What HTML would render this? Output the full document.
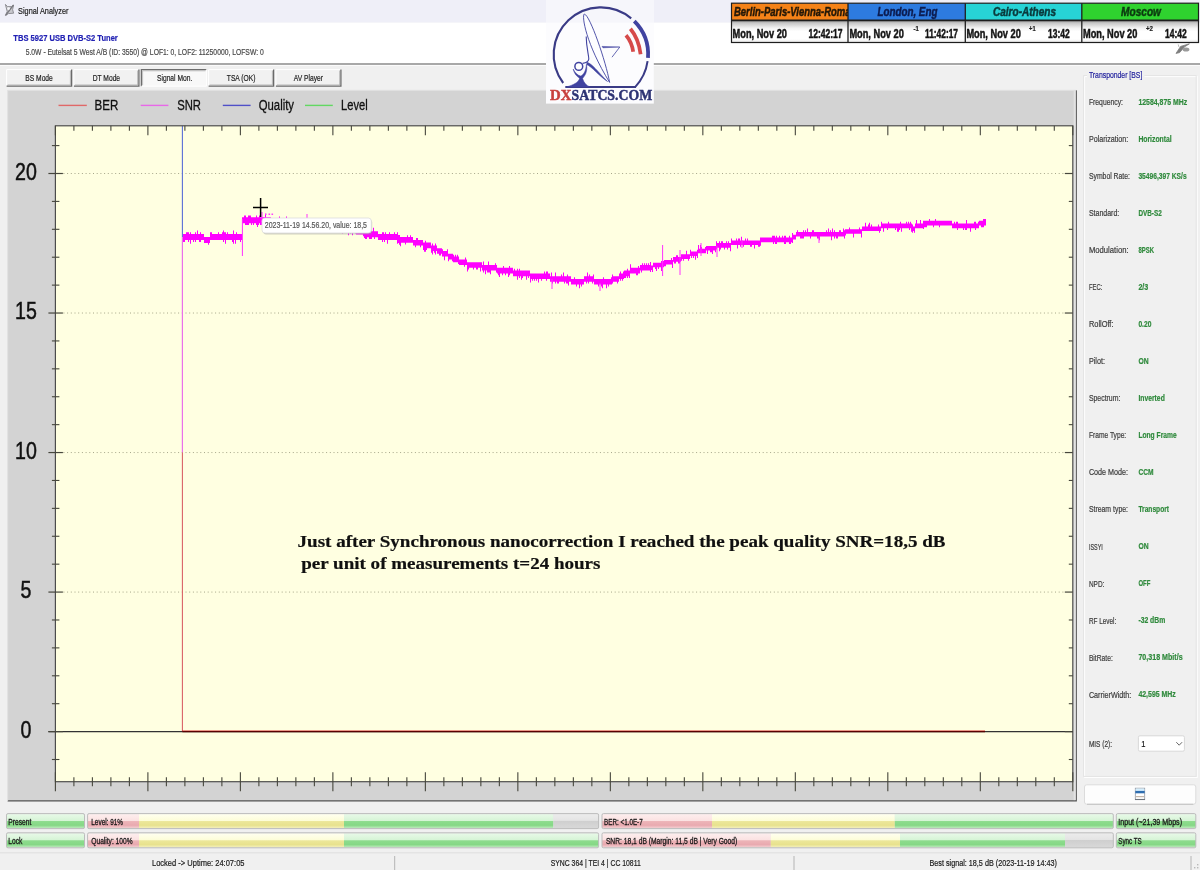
<!DOCTYPE html>
<html lang="en"><head><meta charset="utf-8"><title>Signal Analyzer</title>
<style>html,body{margin:0;padding:0;background:#f0f0f0;overflow:hidden}body{width:1200px;height:870px}svg text{white-space:pre}</style>
</head><body>
<svg width="1200" height="870" viewBox="0 0 1200 870" style="display:block;will-change:transform">
<defs>
<linearGradient id="gG" x1="0" y1="0" x2="0" y2="1"><stop offset="0" stop-color="#e8f9e8"/><stop offset="0.47" stop-color="#d6f4d6"/><stop offset="0.53" stop-color="#8ddc8d"/><stop offset="0.8" stop-color="#86d886"/><stop offset="1" stop-color="#bdeabd"/></linearGradient>
<linearGradient id="gR" x1="0" y1="0" x2="0" y2="1"><stop offset="0" stop-color="#fdeeee"/><stop offset="0.47" stop-color="#fbe2e2"/><stop offset="0.53" stop-color="#edb4b8"/><stop offset="0.8" stop-color="#e9aab0"/><stop offset="1" stop-color="#f3cfd2"/></linearGradient>
<linearGradient id="gY" x1="0" y1="0" x2="0" y2="1"><stop offset="0" stop-color="#fffff0"/><stop offset="0.47" stop-color="#fdfdd8"/><stop offset="0.53" stop-color="#ece79a"/><stop offset="0.8" stop-color="#e8e28e"/><stop offset="1" stop-color="#f3efbc"/></linearGradient>
<linearGradient id="gE" x1="0" y1="0" x2="0" y2="1"><stop offset="0" stop-color="#ececec"/><stop offset="0.45" stop-color="#e4e4e4"/><stop offset="0.5" stop-color="#cfcfcf"/><stop offset="1" stop-color="#d8d8d8"/></linearGradient>
<linearGradient id="gT" x1="0" y1="0" x2="0" y2="1"><stop offset="0" stop-color="#9a9a9a"/><stop offset="0.12" stop-color="#c8c8c8"/><stop offset="0.35" stop-color="#f4f4f4"/><stop offset="0.5" stop-color="#ffffff"/><stop offset="0.85" stop-color="#ffffff"/><stop offset="1" stop-color="#e4e4e4"/></linearGradient>
<clipPath id="cp1"><rect x="732" y="3" width="116" height="18"/></clipPath>
<clipPath id="plot"><rect x="55.5" y="125.5" width="1017.5" height="656"/></clipPath>
</defs>
<rect x="0" y="0" width="1200" height="870" fill="#f0f0f0"/>
<rect x="0" y="0" width="1200" height="22.6" fill="#efeff8"/>
<rect x="0" y="22.6" width="1200" height="40.4" fill="#ffffff"/>
<rect x="0" y="63" width="1200" height="2" fill="#a8a8a8"/>
<line x1="0" y1="65.5" x2="1200" y2="65.5" stroke="#fbfbfb" stroke-width="1"/>
<g><path d="M5.4 4.4 L7.6 6.6 L11.6 6.6 L13.6 5 L12.6 9.6 L13.6 13.2 L8.4 13.6 L5.4 15.6 L7.2 11.4 Z" fill="#c9c9ce" stroke="#86868c" stroke-width="0.9" stroke-linejoin="round"/><path d="M13.4 5.2 L5.8 15.2" stroke="#77777c" stroke-width="1.3" fill="none"/><circle cx="8.6" cy="8.6" r="1.3" fill="#f4f4f8"/></g>
<text x="18.1" y="13.6" font-family="'Liberation Sans', sans-serif" font-size="9.4" stroke="#1c1c1c" stroke-width="0.2" fill="#1c1c1c" textLength="50.3" lengthAdjust="spacingAndGlyphs">Signal Analyzer</text>
<text x="13.3" y="41.4" font-family="'Liberation Sans', sans-serif" font-size="9.7" font-weight="bold" stroke="#2222b4" stroke-width="0.2" fill="#2222b4" textLength="104.5" lengthAdjust="spacingAndGlyphs">TBS 5927 USB DVB-S2 Tuner</text>
<text x="25.7" y="55.4" font-family="'Liberation Sans', sans-serif" font-size="8.6" stroke="#4a4a4a" stroke-width="0.2" fill="#4a4a4a" textLength="238.0" lengthAdjust="spacingAndGlyphs">5.0W - Eutelsat 5 West A/B (ID: 3550) @ LOF1: 0, LOF2: 11250000, LOFSW: 0</text>
<rect x="731.5" y="3.2" width="467" height="39.3" fill="#ffffff"/>
<rect x="731.5" y="3.2" width="116.5" height="17.3" fill="#f58218"/>
<rect x="731.5" y="20.5" width="116.5" height="22" fill="url(#gT)"/>
<rect x="848" y="3.2" width="117.29999999999995" height="17.3" fill="#2d7be0"/>
<rect x="848" y="20.5" width="117.29999999999995" height="22" fill="url(#gT)"/>
<rect x="965.3" y="3.2" width="116.5" height="17.3" fill="#27d3d6"/>
<rect x="965.3" y="20.5" width="116.5" height="22" fill="url(#gT)"/>
<rect x="1081.8" y="3.2" width="116.70000000000005" height="17.3" fill="#2fd22f"/>
<rect x="1081.8" y="20.5" width="116.70000000000005" height="22" fill="url(#gT)"/>
<text x="734.0" y="15.8" font-family="'Liberation Sans', sans-serif" font-size="12.6" font-weight="bold" font-style="italic" fill="#241808" textLength="116.5" lengthAdjust="spacingAndGlyphs" clip-path="url(#cp1)" stroke="#241808" stroke-width="0.5">Berlin-Paris-Vienna-Roma</text>
<text x="877.4" y="15.8" font-family="'Liberation Sans', sans-serif" font-size="12.6" font-weight="bold" font-style="italic" fill="#0c1c50" textLength="60.0" lengthAdjust="spacingAndGlyphs" stroke="#0c1c50" stroke-width="0.5">London, Eng</text>
<text x="993.0" y="15.8" font-family="'Liberation Sans', sans-serif" font-size="12.6" font-weight="bold" font-style="italic" fill="#0a3a3c" textLength="63.0" lengthAdjust="spacingAndGlyphs" stroke="#0a3a3c" stroke-width="0.5">Cairo-Athens</text>
<text x="1121.0" y="15.8" font-family="'Liberation Sans', sans-serif" font-size="12.6" font-weight="bold" font-style="italic" fill="#0c3a10" textLength="40.0" lengthAdjust="spacingAndGlyphs" stroke="#0c3a10" stroke-width="0.5">Moscow</text>
<text x="732.6" y="38.0" font-family="'Liberation Sans', sans-serif" font-size="12.4" font-weight="bold" fill="#141414" textLength="54.4" lengthAdjust="spacingAndGlyphs" stroke="#141414" stroke-width="0.5">Mon, Nov 20</text>
<text x="849.4" y="38.0" font-family="'Liberation Sans', sans-serif" font-size="12.4" font-weight="bold" fill="#141414" textLength="54.4" lengthAdjust="spacingAndGlyphs" stroke="#141414" stroke-width="0.5">Mon, Nov 20</text>
<text x="966.4" y="38.0" font-family="'Liberation Sans', sans-serif" font-size="12.4" font-weight="bold" fill="#141414" textLength="54.4" lengthAdjust="spacingAndGlyphs" stroke="#141414" stroke-width="0.5">Mon, Nov 20</text>
<text x="1083.0" y="38.0" font-family="'Liberation Sans', sans-serif" font-size="12.4" font-weight="bold" fill="#141414" textLength="54.4" lengthAdjust="spacingAndGlyphs" stroke="#141414" stroke-width="0.5">Mon, Nov 20</text>
<text x="808.5" y="38.0" font-family="'Liberation Sans', sans-serif" font-size="12.4" font-weight="bold" fill="#141414" textLength="34.1" lengthAdjust="spacingAndGlyphs" stroke="#141414" stroke-width="0.5">12:42:17</text>
<text x="925.0" y="38.0" font-family="'Liberation Sans', sans-serif" font-size="12.4" font-weight="bold" fill="#141414" textLength="33.0" lengthAdjust="spacingAndGlyphs" stroke="#141414" stroke-width="0.5">11:42:17</text>
<text x="1048.0" y="38.0" font-family="'Liberation Sans', sans-serif" font-size="12.4" font-weight="bold" fill="#141414" textLength="21.6" lengthAdjust="spacingAndGlyphs" stroke="#141414" stroke-width="0.5">13:42</text>
<text x="1165.0" y="38.0" font-family="'Liberation Sans', sans-serif" font-size="12.4" font-weight="bold" fill="#141414" textLength="21.6" lengthAdjust="spacingAndGlyphs" stroke="#141414" stroke-width="0.5">14:42</text>
<text x="913.4" y="31.0" font-family="'Liberation Sans', sans-serif" font-size="6.5" font-weight="bold" stroke="#222" stroke-width="0.2" fill="#222" textLength="5.4" lengthAdjust="spacingAndGlyphs">-1</text>
<text x="1029.0" y="31.0" font-family="'Liberation Sans', sans-serif" font-size="6.5" font-weight="bold" stroke="#222" stroke-width="0.2" fill="#222" textLength="6.6" lengthAdjust="spacingAndGlyphs">+1</text>
<text x="1146.0" y="31.0" font-family="'Liberation Sans', sans-serif" font-size="6.5" font-weight="bold" stroke="#222" stroke-width="0.2" fill="#222" textLength="7.0" lengthAdjust="spacingAndGlyphs">+2</text>
<rect x="731.5" y="3.2" width="467" height="39.3" fill="none" stroke="#1e1e1e" stroke-width="1.2"/>
<line x1="731.5" y1="20.4" x2="1198.5" y2="20.4" stroke="#1e1e1e" stroke-width="1.8"/>
<line x1="848" y1="3.2" x2="848" y2="42.5" stroke="#1e1e1e" stroke-width="1.3"/>
<line x1="965.3" y1="3.2" x2="965.3" y2="42.5" stroke="#1e1e1e" stroke-width="1.3"/>
<line x1="1081.8" y1="3.2" x2="1081.8" y2="42.5" stroke="#1e1e1e" stroke-width="1.3"/>
<g><path d="M1176 53.4 L1180.6 46.4 L1189.4 43.8 L1184.6 46.8 L1179.6 52.6 Z" fill="#7c7c7c" stroke="#7c7c7c" stroke-width="0.8" stroke-linejoin="round"/><ellipse cx="1186" cy="49.6" rx="3.4" ry="2" fill="#9a9a9a"/><path d="M1178.2 44.4 L1179 47" stroke="#b0b0b0" stroke-width="0.9"/></g>
<rect x="6.6" y="69.6" width="65" height="16.6" fill="#f1f1f1"/>
<path d="M6.6 86.19999999999999 V69.6 H71.6" fill="none" stroke="#ffffff" stroke-width="1"/>
<path d="M71.6 69.6 V86.19999999999999 H6.6" fill="none" stroke="#6a6a6a" stroke-width="1.3"/>
<path d="M70.39999999999999 70.6 V84.99999999999999 H7.6" fill="none" stroke="#a8a8a8" stroke-width="0.8"/>
<text x="25.3" y="80.7" font-family="'Liberation Sans', sans-serif" font-size="8.8" stroke="#1e1e1e" stroke-width="0.2" fill="#1e1e1e" textLength="27.5" lengthAdjust="spacingAndGlyphs">BS Mode</text>
<rect x="73.9" y="69.6" width="65" height="16.6" fill="#f1f1f1"/>
<path d="M73.9 86.19999999999999 V69.6 H138.9" fill="none" stroke="#ffffff" stroke-width="1"/>
<path d="M138.9 69.6 V86.19999999999999 H73.9" fill="none" stroke="#6a6a6a" stroke-width="1.3"/>
<path d="M137.70000000000002 70.6 V84.99999999999999 H74.9" fill="none" stroke="#a8a8a8" stroke-width="0.8"/>
<text x="92.7" y="80.7" font-family="'Liberation Sans', sans-serif" font-size="8.8" stroke="#1e1e1e" stroke-width="0.2" fill="#1e1e1e" textLength="27.4" lengthAdjust="spacingAndGlyphs">DT Mode</text>
<rect x="141.4" y="69.6" width="65" height="16.6" fill="#f8f8f8"/>
<path d="M141.4 86.19999999999999 V69.6 H206.4" fill="none" stroke="#6e6e6e" stroke-width="1.3"/>
<path d="M206.4 69.6 V86.19999999999999 H141.4" fill="none" stroke="#ffffff" stroke-width="1"/>
<path d="M142.6 85.19999999999999 V70.8 H205.4" fill="none" stroke="#b4b4b4" stroke-width="0.8"/>
<text x="157.0" y="81.3" font-family="'Liberation Sans', sans-serif" font-size="8.8" stroke="#1e1e1e" stroke-width="0.2" fill="#1e1e1e" textLength="35.3" lengthAdjust="spacingAndGlyphs">Signal Mon.</text>
<rect x="208.6" y="69.6" width="65" height="16.6" fill="#f1f1f1"/>
<path d="M208.6 86.19999999999999 V69.6 H273.6" fill="none" stroke="#ffffff" stroke-width="1"/>
<path d="M273.6 69.6 V86.19999999999999 H208.6" fill="none" stroke="#6a6a6a" stroke-width="1.3"/>
<path d="M272.40000000000003 70.6 V84.99999999999999 H209.6" fill="none" stroke="#a8a8a8" stroke-width="0.8"/>
<text x="226.8" y="80.7" font-family="'Liberation Sans', sans-serif" font-size="8.8" stroke="#1e1e1e" stroke-width="0.2" fill="#1e1e1e" textLength="28.6" lengthAdjust="spacingAndGlyphs">TSA (OK)</text>
<rect x="275.9" y="69.6" width="65" height="16.6" fill="#f1f1f1"/>
<path d="M275.9 86.19999999999999 V69.6 H340.9" fill="none" stroke="#ffffff" stroke-width="1"/>
<path d="M340.9 69.6 V86.19999999999999 H275.9" fill="none" stroke="#6a6a6a" stroke-width="1.3"/>
<path d="M339.7 70.6 V84.99999999999999 H276.9" fill="none" stroke="#a8a8a8" stroke-width="0.8"/>
<text x="293.8" y="80.7" font-family="'Liberation Sans', sans-serif" font-size="8.8" stroke="#1e1e1e" stroke-width="0.2" fill="#1e1e1e" textLength="29.2" lengthAdjust="spacingAndGlyphs">AV Player</text>
<rect x="7.6" y="90.3" width="1068.6000000000001" height="710.5" fill="#d3d3d3"/>
<path d="M7.6 800.8 H1076.2 V90.3" fill="none" stroke="#525252" stroke-width="1.3"/>
<path d="M7.6 800.8 V90.3 H1076.2" fill="none" stroke="#e2e2e2" stroke-width="1"/>
<rect x="1073.6" y="90.8" width="2.2" height="709.3" fill="#e2e2e2"/>
<rect x="55.4" y="125.8" width="1017.4" height="655.9000000000001" fill="#ffffe1"/>
<line x1="63.4" y1="592.075" x2="1064.8" y2="592.075" stroke="#a6a68a" stroke-width="1" stroke-dasharray="1 2.7"/>
<line x1="63.4" y1="452.55" x2="1064.8" y2="452.55" stroke="#a6a68a" stroke-width="1" stroke-dasharray="1 2.7"/>
<line x1="63.4" y1="313.025" x2="1064.8" y2="313.025" stroke="#a6a68a" stroke-width="1" stroke-dasharray="1 2.7"/>
<line x1="63.4" y1="173.5" x2="1064.8" y2="173.5" stroke="#a6a68a" stroke-width="1" stroke-dasharray="1 2.7"/>
<line x1="58.5" y1="105.4" x2="86.8" y2="105.4" stroke="#e06868" stroke-width="1.4"/>
<text x="94.5" y="109.8" font-family="'Liberation Sans', sans-serif" font-size="14" stroke="#111" stroke-width="0.3" fill="#111" textLength="23.8" lengthAdjust="spacingAndGlyphs">BER</text>
<line x1="140.7" y1="105.4" x2="168.4" y2="105.4" stroke="#e868e8" stroke-width="1.4"/>
<text x="177.2" y="109.8" font-family="'Liberation Sans', sans-serif" font-size="14" stroke="#111" stroke-width="0.3" fill="#111" textLength="23.8" lengthAdjust="spacingAndGlyphs">SNR</text>
<line x1="222.8" y1="105.4" x2="250.6" y2="105.4" stroke="#5050c8" stroke-width="1.4"/>
<text x="258.7" y="109.8" font-family="'Liberation Sans', sans-serif" font-size="14" stroke="#111" stroke-width="0.3" fill="#111" textLength="35.3" lengthAdjust="spacingAndGlyphs">Quality</text>
<line x1="305" y1="105.4" x2="332.8" y2="105.4" stroke="#62d862" stroke-width="1.4"/>
<text x="341.0" y="109.8" font-family="'Liberation Sans', sans-serif" font-size="14" stroke="#111" stroke-width="0.3" fill="#111" textLength="26.6" lengthAdjust="spacingAndGlyphs">Level</text>
<text x="20.6" y="737.7" font-family="'Liberation Sans', sans-serif" font-size="24.6" stroke="#111" stroke-width="0.5" fill="#111" textLength="10.9" lengthAdjust="spacingAndGlyphs">0</text>
<text x="20.6" y="598.2" font-family="'Liberation Sans', sans-serif" font-size="24.6" stroke="#111" stroke-width="0.5" fill="#111" textLength="10.9" lengthAdjust="spacingAndGlyphs">5</text>
<text x="15.1" y="458.7" font-family="'Liberation Sans', sans-serif" font-size="24.6" stroke="#111" stroke-width="0.5" fill="#111" textLength="21.8" lengthAdjust="spacingAndGlyphs">10</text>
<text x="15.1" y="319.1" font-family="'Liberation Sans', sans-serif" font-size="24.6" stroke="#111" stroke-width="0.5" fill="#111" textLength="21.8" lengthAdjust="spacingAndGlyphs">15</text>
<text x="15.1" y="179.6" font-family="'Liberation Sans', sans-serif" font-size="24.6" stroke="#111" stroke-width="0.5" fill="#111" textLength="21.8" lengthAdjust="spacingAndGlyphs">20</text>
<g clip-path="url(#plot)">
<line x1="182.4" y1="125.8" x2="182.4" y2="237" stroke="#5a6ed6" stroke-width="1.1"/>
<line x1="182.4" y1="237" x2="182.4" y2="452.55" stroke="#ea70ea" stroke-width="1.2"/>
<line x1="182.4" y1="452.55" x2="182.4" y2="731.6" stroke="#d85c62" stroke-width="1.05"/>
<path d="M183.5 234.1V241.9M184.5 234.1V241.9M185.5 234.1V240.1M186.5 232.3V240.1M187.5 232.3V240.1M188.5 232.3V241.9M189.5 234.1V240.1M190.5 232.3V243.7M191.5 234.1V240.1M192.5 234.1V240.1M193.5 234.1V241.9M194.5 234.1V240.1M195.5 232.3V241.9M196.5 234.1V240.1M197.5 230.5V240.1M198.5 234.1V240.1M199.5 234.1V241.9M200.5 232.3V241.9M201.5 234.1V240.1M202.5 234.1V240.1M203.5 234.1V240.1M204.5 236.9V242.9M205.5 236.9V242.9M206.5 236.9V242.9M207.5 236.9V242.9M208.5 236.9V244.7M209.5 236.9V242.9M210.5 232.3V240.1M211.5 232.3V240.1M212.5 234.1V240.1M213.5 234.1V240.1M214.5 234.1V240.1M215.5 234.1V240.1M216.5 234.1V240.1M217.5 234.1V240.1M218.5 232.3V240.1M219.5 234.1V240.1M220.5 234.1V240.1M221.5 234.1V240.1M222.5 232.3V240.1M223.5 230.5V241.9M224.5 232.3V240.1M225.5 232.3V243.7M226.5 234.1V240.1M227.5 232.3V240.1M228.5 234.1V240.1M229.5 234.1V240.1M230.5 234.1V240.1M231.5 234.1V240.1M232.5 234.1V241.9M233.5 230.5V243.7M234.5 234.1V240.1M235.5 234.1V243.7M236.5 232.3V240.1M237.5 234.1V240.1M238.5 234.1V240.1M239.5 234.1V240.1M240.5 234.1V241.9M241.5 234.1V240.1M242.5 217.3V223.3M243.5 217.3V223.3M244.5 215.5V223.3M245.5 215.5V225.1M246.5 217.3V225.1M247.5 217.3V225.1M248.5 215.5V225.1M249.5 215.5V223.3M250.5 215.5V223.3M251.5 217.3V225.1M252.5 217.3V223.3M253.5 217.3V225.1M254.5 217.3V223.3M255.5 217.3V223.3M256.5 215.5V225.1M257.5 217.3V226.9M258.5 217.3V225.1M259.5 215.5V223.3M260.5 217.3V225.1M261.5 217.3V225.1M262.5 217.3V223.3M263.5 217.3V223.3M264.5 217.3V223.3M265.5 213.7V223.3M266.5 217.3V223.3M267.5 217.3V226.9M268.5 217.3V223.3M269.5 217.3V223.3M270.5 217.3V223.3M271.5 220.1V226.1M272.5 220.1V227.9M273.5 218.3V226.1M274.5 220.1V226.1M275.5 220.1V226.1M276.5 220.1V226.1M277.5 220.1V226.1M278.5 220.1V229.7M279.5 216.5V227.9M280.5 220.1V226.1M281.5 220.1V226.1M282.5 220.1V226.1M283.5 218.3V226.1M284.5 220.1V226.1M285.5 220.1V226.1M286.5 216.5V226.1M287.5 220.1V226.1M288.5 220.1V226.1M289.5 220.1V226.1M290.5 220.1V227.9M291.5 218.3V227.9M292.5 220.1V226.1M293.5 218.3V226.1M294.5 220.1V226.1M295.5 220.1V226.1M296.5 218.3V227.9M297.5 220.1V226.1M298.5 220.1V226.1M299.5 220.1V226.1M300.5 220.1V227.9M301.5 220.1V226.1M302.5 220.1V226.1M303.5 220.1V226.1M304.5 218.3V226.1M305.5 222.9V228.9M306.5 222.9V228.9M307.5 222.9V228.9M308.5 222.9V228.9M309.5 222.9V230.7M310.5 222.9V230.7M311.5 221.1V228.9M312.5 219.3V228.9M313.5 222.9V228.9M314.5 222.9V228.9M315.5 222.9V228.9M316.5 221.1V228.9M317.5 222.9V228.9M318.5 222.9V228.9M319.5 222.9V228.9M320.5 222.9V228.9M321.5 222.9V228.9M322.5 222.9V228.9M323.5 222.9V228.9M324.5 222.9V228.9M325.5 222.9V228.9M326.5 222.9V232.5M327.5 222.9V228.9M328.5 222.9V230.7M329.5 221.1V228.9M330.5 221.1V232.5M331.5 221.1V228.9M332.5 222.9V228.9M333.5 221.1V228.9M334.5 222.9V230.7M335.5 222.9V228.9M336.5 222.9V228.9M337.5 222.9V228.9M338.5 222.9V228.9M339.5 219.3V228.9M340.5 222.9V228.9M341.5 222.1V231.7M342.5 225.7V233.5M343.5 225.7V231.7M344.5 223.9V231.7M345.5 225.7V231.7M346.5 223.9V231.7M347.5 225.7V231.7M348.5 223.9V235.3M349.5 223.9V231.7M350.5 225.7V233.5M351.5 225.7V231.7M352.5 225.7V235.3M353.5 223.9V231.7M354.5 225.7V231.7M355.5 223.9V233.5M356.5 228.5V234.5M357.5 226.7V234.5M358.5 228.5V234.5M359.5 226.7V234.5M360.5 226.7V234.5M361.5 228.5V234.5M362.5 228.5V234.5M363.5 228.5V236.3M364.5 228.5V238.1M365.5 229.5V239.1M366.5 229.5V239.1M367.5 231.3V237.3M368.5 231.3V237.3M369.5 231.3V239.1M370.5 231.3V239.1M371.5 231.3V239.1M372.5 231.3V237.3M373.5 227.7V237.3M374.5 231.3V239.1M375.5 231.3V237.3M376.5 231.3V237.3M377.5 231.3V237.3M378.5 234.1V240.1M379.5 234.1V240.1M380.5 234.1V240.1M381.5 234.1V240.1M382.5 232.3V241.9M383.5 232.3V240.1M384.5 234.1V241.9M385.5 232.3V240.1M386.5 234.1V240.1M387.5 234.1V243.7M388.5 234.1V240.1M389.5 232.3V240.1M390.5 234.1V240.1M391.5 234.1V240.1M392.5 234.1V240.1M393.5 234.1V240.1M394.5 232.3V240.1M395.5 234.1V240.1M396.5 234.1V240.1M397.5 232.3V243.7M398.5 235.1V242.9M399.5 235.1V244.7M400.5 237.1V246.3M401.5 237.1V242.7M402.5 237.1V242.7M403.5 237.1V242.7M404.5 237.1V242.7M405.5 237.1V244.5M406.5 237.1V242.7M407.5 235.3V242.7M408.5 237.1V242.7M409.5 237.1V242.7M410.5 235.3V242.7M411.5 237.1V242.7M412.5 237.1V242.7M413.5 239.9V245.5M414.5 239.9V245.5M415.5 239.9V247.3M416.5 238.1V245.5M417.5 238.1V245.5M418.5 239.9V245.5M419.5 239.9V245.5M420.5 239.9V247.3M421.5 239.9V245.5M422.5 239.9V245.5M423.5 242.6V250.0M424.5 242.6V251.8M425.5 240.8V251.8M426.5 242.6V250.0M427.5 242.6V248.2M428.5 242.6V248.2M429.5 242.6V248.2M430.5 242.6V248.2M431.5 245.4V252.8M432.5 243.6V254.6M433.5 245.4V251.0M434.5 245.4V252.8M435.5 243.6V254.6M436.5 245.4V251.0M437.5 248.2V253.8M438.5 248.2V253.8M439.5 248.2V255.6M440.5 248.2V255.6M441.5 248.2V253.8M442.5 249.2V256.6M443.5 251.0V256.6M444.5 251.0V260.2M445.5 251.0V256.6M446.5 251.0V256.6M447.5 249.2V256.6M448.5 253.8V261.2M449.5 253.8V259.4M450.5 253.8V259.4M451.5 253.8V259.4M452.5 253.8V261.2M453.5 254.8V262.2M454.5 256.6V262.2M455.5 254.8V262.2M456.5 256.6V262.2M457.5 254.8V262.2M458.5 256.6V264.0M459.5 259.4V265.0M460.5 259.4V265.0M461.5 259.4V265.0M462.5 259.4V265.0M463.5 259.4V265.0M464.5 259.4V266.8M465.5 257.6V265.0M466.5 259.4V265.0M467.5 262.2V271.4M468.5 262.2V269.6M469.5 262.2V267.8M470.5 262.2V267.8M471.5 262.2V267.8M472.5 262.2V267.8M473.5 262.2V269.6M474.5 262.2V267.8M475.5 262.2V267.8M476.5 262.2V269.6M477.5 262.2V269.6M478.5 262.2V267.8M479.5 262.2V267.8M480.5 262.2V271.4M481.5 262.2V267.8M482.5 265.0V270.6M483.5 261.4V272.4M484.5 265.0V270.6M485.5 265.0V274.2M486.5 265.0V270.6M487.5 265.0V272.4M488.5 261.4V272.4M489.5 265.0V272.4M490.5 265.0V274.2M491.5 265.0V270.6M492.5 265.0V270.6M493.5 265.0V270.6M494.5 265.0V270.6M495.5 263.2V270.6M496.5 265.0V272.4M497.5 267.8V273.4M498.5 267.8V275.2M499.5 267.8V277.0M500.5 267.8V273.4M501.5 267.8V273.4M502.5 267.8V275.2M503.5 266.0V273.4M504.5 267.8V273.4M505.5 267.8V275.2M506.5 267.8V273.4M507.5 267.8V273.4M508.5 267.8V277.0M509.5 266.0V275.2M510.5 267.8V273.4M511.5 267.8V273.4M512.5 267.8V273.4M513.5 270.6V276.2M514.5 268.8V276.2M515.5 270.6V276.2M516.5 270.6V276.2M517.5 268.8V279.8M518.5 270.6V276.2M519.5 268.8V278.0M520.5 270.6V276.2M521.5 270.6V279.8M522.5 270.6V278.0M523.5 270.6V276.2M524.5 270.6V276.2M525.5 270.6V276.2M526.5 270.6V279.8M527.5 270.6V276.2M528.5 270.6V278.0M529.5 270.6V276.2M530.5 273.4V282.6M531.5 273.4V279.0M532.5 273.4V280.8M533.5 273.4V279.0M534.5 273.4V280.8M535.5 273.4V279.0M536.5 273.4V280.8M537.5 273.4V279.0M538.5 273.4V282.6M539.5 273.4V279.0M540.5 273.4V279.0M541.5 273.4V280.8M542.5 273.4V279.0M543.5 273.4V279.0M544.5 271.6V279.0M545.5 273.4V279.0M546.5 271.6V280.8M547.5 271.6V279.0M548.5 273.4V279.0M549.5 273.4V279.0M550.5 276.2V281.8M551.5 272.6V281.8M552.5 276.2V283.6M553.5 276.2V281.8M554.5 276.2V281.8M555.5 272.6V283.6M556.5 276.2V281.8M557.5 276.2V283.6M558.5 276.2V283.6M559.5 276.2V281.8M560.5 276.2V281.8M561.5 274.4V281.8M562.5 276.2V281.8M563.5 272.6V281.8M564.5 276.2V283.6M565.5 276.2V281.8M566.5 276.2V283.6M567.5 274.4V283.6M568.5 276.2V285.4M569.5 276.2V281.8M570.5 276.2V281.8M571.5 279.0V284.6M572.5 279.0V284.6M573.5 279.0V284.6M574.5 277.2V284.6M575.5 279.0V284.6M576.5 279.0V286.4M577.5 279.0V284.6M578.5 279.0V284.6M579.5 279.0V288.2M580.5 279.0V284.6M581.5 279.0V286.4M582.5 279.0V284.6M583.5 279.0V284.6M584.5 276.2V281.8M585.5 276.2V281.8M586.5 276.2V283.6M587.5 272.6V281.8M588.5 276.2V283.6M589.5 274.4V281.8M590.5 276.2V281.8M591.5 276.2V281.8M592.5 276.2V283.6M593.5 274.4V281.8M594.5 279.0V284.6M595.5 279.0V284.6M596.5 279.0V284.6M597.5 279.0V284.6M598.5 279.0V286.4M599.5 279.0V284.6M600.5 279.0V284.6M601.5 279.0V286.4M602.5 279.0V288.2M603.5 277.2V284.6M604.5 279.0V284.6M605.5 279.0V284.6M606.5 279.0V288.2M607.5 279.0V284.6M608.5 279.0V286.4M609.5 279.0V284.6M610.5 279.0V284.6M611.5 277.2V284.6M612.5 274.4V283.6M613.5 276.2V281.8M614.5 276.2V281.8M615.5 276.2V281.8M616.5 276.2V281.8M617.5 276.2V283.6M618.5 276.2V281.8M619.5 273.4V279.0M620.5 271.6V280.8M621.5 273.4V279.0M622.5 273.4V280.8M623.5 271.6V279.0M624.5 270.6V278.0M625.5 270.6V278.0M626.5 270.6V276.2M627.5 268.8V278.0M628.5 270.6V276.2M629.5 270.6V278.0M630.5 264.2V273.4M631.5 267.8V273.4M632.5 267.8V273.4M633.5 267.8V273.4M634.5 267.8V273.4M635.5 267.8V273.4M636.5 267.8V275.2M637.5 267.8V275.2M638.5 266.0V273.4M639.5 267.8V273.4M640.5 265.0V270.6M641.5 265.0V272.4M642.5 263.2V270.6M643.5 265.0V270.6M644.5 263.2V270.6M645.5 265.0V270.6M646.5 263.2V270.6M647.5 265.0V270.6M648.5 263.2V270.6M649.5 265.0V270.6M650.5 261.9V271.9M651.5 265.5V270.1M652.5 265.5V271.9M653.5 262.7V267.3M654.5 262.7V267.3M655.5 262.7V269.1M656.5 262.7V270.9M657.5 262.7V267.3M658.5 262.7V269.1M659.5 262.7V267.3M660.5 262.7V267.3M661.5 260.9V270.9M662.5 262.7V267.3M663.5 260.9V267.3M664.5 259.9V266.3M665.5 259.9V266.3M666.5 259.9V264.5M667.5 259.9V264.5M668.5 259.9V264.5M669.5 259.9V264.5M670.5 259.9V264.5M671.5 258.1V264.5M672.5 259.9V268.1M673.5 257.1V261.7M674.5 257.1V263.5M675.5 257.1V263.5M676.5 255.3V261.7M677.5 255.3V261.7M678.5 257.1V263.5M679.5 257.1V263.5M680.5 257.1V261.7M681.5 254.3V260.7M682.5 254.3V258.9M683.5 254.3V260.7M684.5 254.3V258.9M685.5 254.3V258.9M686.5 250.7V258.9M687.5 254.3V258.9M688.5 254.3V260.7M689.5 254.3V258.9M690.5 249.7V256.1M691.5 251.5V257.9M692.5 251.5V256.1M693.5 251.5V257.9M694.5 251.5V256.1M695.5 251.5V259.7M696.5 251.5V256.1M697.5 249.7V257.9M698.5 245.1V253.3M699.5 248.7V253.3M700.5 245.1V253.3M701.5 246.9V253.3M702.5 248.7V253.3M703.5 248.7V253.3M704.5 248.7V253.3M705.5 246.9V253.3M706.5 245.9V250.5M707.5 245.9V254.1M708.5 245.9V250.5M709.5 245.9V250.5M710.5 245.9V252.3M711.5 245.9V252.3M712.5 245.9V254.1M713.5 245.9V250.5M714.5 245.9V250.5M715.5 245.9V252.3M716.5 241.3V249.5M717.5 243.1V247.7M718.5 243.1V247.7M719.5 241.3V251.3M720.5 243.1V249.5M721.5 241.3V247.7M722.5 241.3V247.7M723.5 243.1V247.7M724.5 243.1V249.5M725.5 243.1V247.7M726.5 241.3V247.7M727.5 243.1V249.5M728.5 241.3V247.7M729.5 243.1V247.7M730.5 243.1V251.3M731.5 238.6V245.0M732.5 240.4V245.0M733.5 240.4V245.0M734.5 240.4V245.0M735.5 240.4V245.0M736.5 238.6V245.0M737.5 240.4V248.6M738.5 238.6V245.0M739.5 238.6V245.0M740.5 240.4V246.8M741.5 236.8V245.0M742.5 240.4V245.0M743.5 240.4V246.8M744.5 240.4V245.0M745.5 238.6V245.0M746.5 240.4V245.0M747.5 238.6V245.0M748.5 240.4V245.0M749.5 240.4V245.0M750.5 240.4V246.8M751.5 240.4V246.8M752.5 240.4V245.0M753.5 240.4V245.0M754.5 240.4V248.6M755.5 240.4V245.0M756.5 240.4V245.0M757.5 240.4V245.0M758.5 240.4V246.8M759.5 240.4V246.8M760.5 237.6V245.8M761.5 237.6V242.2M762.5 237.6V242.2M763.5 237.6V242.2M764.5 237.6V242.2M765.5 237.6V242.2M766.5 237.6V242.2M767.5 237.6V242.2M768.5 237.6V242.2M769.5 237.6V242.2M770.5 237.6V242.2M771.5 237.6V242.2M772.5 235.8V242.2M773.5 235.8V244.0M774.5 235.8V242.2M775.5 237.6V244.0M776.5 235.8V244.0M777.5 237.6V242.2M778.5 237.6V242.2M779.5 235.8V242.2M780.5 237.6V242.2M781.5 237.6V242.2M782.5 235.8V242.2M783.5 237.6V242.2M784.5 235.8V244.0M785.5 235.8V244.0M786.5 237.6V242.2M787.5 237.6V242.2M788.5 237.6V242.2M789.5 235.8V244.0M790.5 237.6V244.0M791.5 237.6V242.2M792.5 233.0V243.0M793.5 234.8V239.4M794.5 234.8V239.4M795.5 234.8V239.4M796.5 232.0V236.6M797.5 230.2V236.6M798.5 232.0V236.6M799.5 232.0V236.6M800.5 232.0V238.4M801.5 232.0V238.4M802.5 232.0V238.4M803.5 230.2V238.4M804.5 232.0V236.6M805.5 230.2V236.6M806.5 232.0V236.6M807.5 228.4V236.6M808.5 232.0V236.6M809.5 232.0V236.6M810.5 232.0V238.4M811.5 232.0V236.6M812.5 230.2V236.6M813.5 230.2V236.6M814.5 232.0V236.6M815.5 232.0V236.6M816.5 232.0V236.6M817.5 232.0V238.4M818.5 232.0V238.4M819.5 232.0V240.2M820.5 232.0V236.6M821.5 232.0V236.6M822.5 232.0V236.6M823.5 232.0V236.6M824.5 232.0V236.6M825.5 232.0V236.6M826.5 230.2V236.6M827.5 232.0V236.6M828.5 228.4V236.6M829.5 232.0V236.6M830.5 230.2V236.6M831.5 232.0V240.2M832.5 228.4V236.6M833.5 232.0V236.6M834.5 230.2V238.4M835.5 232.0V236.6M836.5 232.0V238.4M837.5 232.0V238.4M838.5 232.0V236.6M839.5 230.2V236.6M840.5 230.2V236.6M841.5 232.0V236.6M842.5 232.0V236.6M843.5 228.4V236.6M844.5 230.2V238.4M845.5 229.2V235.6M846.5 229.2V233.8M847.5 229.2V233.8M848.5 229.2V233.8M849.5 227.4V233.8M850.5 229.2V233.8M851.5 229.2V233.8M852.5 229.2V233.8M853.5 229.2V237.4M854.5 229.2V233.8M855.5 229.2V233.8M856.5 229.2V233.8M857.5 229.2V233.8M858.5 229.2V233.8M859.5 227.4V233.8M860.5 229.2V233.8M861.5 229.2V237.4M862.5 226.4V231.0M863.5 226.4V231.0M864.5 226.4V231.0M865.5 222.8V231.0M866.5 226.4V231.0M867.5 226.4V231.0M868.5 224.6V231.0M869.5 222.8V231.0M870.5 226.4V231.0M871.5 224.6V231.0M872.5 226.4V231.0M873.5 226.4V231.0M874.5 226.4V231.0M875.5 226.4V231.0M876.5 226.4V231.0M877.5 226.4V231.0M878.5 224.6V231.0M879.5 226.4V232.8M880.5 226.4V231.0M881.5 221.8V228.2M882.5 223.6V228.2M883.5 223.6V231.8M884.5 223.6V228.2M885.5 223.6V228.2M886.5 223.6V228.2M887.5 223.6V230.0M888.5 221.8V228.2M889.5 223.6V228.2M890.5 223.6V228.2M891.5 223.6V228.2M892.5 223.6V228.2M893.5 223.6V228.2M894.5 223.6V228.2M895.5 223.6V230.0M896.5 223.6V228.2M897.5 223.6V231.8M898.5 223.6V231.8M899.5 223.6V230.0M900.5 221.8V228.2M901.5 223.6V231.8M902.5 223.6V228.2M903.5 223.6V228.2M904.5 223.6V228.2M905.5 223.6V228.2M906.5 221.8V228.2M907.5 223.6V228.2M908.5 221.8V228.2M909.5 223.6V230.0M910.5 221.8V228.2M911.5 223.6V231.8M912.5 224.6V232.8M913.5 226.4V231.0M914.5 226.4V232.8M915.5 223.6V228.2M916.5 220.0V228.2M917.5 223.6V228.2M918.5 223.6V228.2M919.5 223.6V228.2M920.5 220.0V228.2M921.5 223.6V228.2M922.5 223.6V228.2M923.5 220.8V229.0M924.5 220.8V227.2M925.5 220.8V227.2M926.5 220.8V227.2M927.5 220.8V225.4M928.5 220.8V225.4M929.5 219.0V225.4M930.5 220.8V225.4M931.5 220.8V225.4M932.5 220.8V225.4M933.5 220.8V227.2M934.5 220.8V225.4M935.5 219.0V225.4M936.5 220.8V225.4M937.5 220.8V225.4M938.5 220.8V225.4M939.5 220.8V227.2M940.5 220.8V225.4M941.5 220.8V225.4M942.5 220.8V225.4M943.5 220.8V225.4M944.5 220.8V225.4M945.5 220.8V225.4M946.5 220.8V225.4M947.5 220.8V225.4M948.5 220.8V225.4M949.5 220.8V225.4M950.5 220.8V225.4M951.5 220.8V225.4M952.5 223.6V228.2M953.5 223.6V228.2M954.5 221.8V228.2M955.5 223.6V228.2M956.5 221.8V228.2M957.5 221.8V230.0M958.5 223.6V228.2M959.5 223.6V228.2M960.5 223.6V228.2M961.5 223.6V228.2M962.5 223.6V228.2M963.5 223.6V230.0M964.5 223.6V228.2M965.5 223.6V230.0M966.5 220.0V230.0M967.5 223.6V228.2M968.5 223.6V228.2M969.5 223.6V228.2M970.5 223.6V231.8M971.5 223.6V228.2M972.5 223.6V228.2M973.5 223.6V228.2M974.5 221.8V228.2M975.5 221.8V230.0M976.5 223.6V228.2M977.5 223.6V228.2M978.5 221.8V228.2M979.5 220.8V225.4M980.5 220.8V225.4M981.5 220.8V227.2M982.5 220.8V227.2M983.5 219.0V227.2M984.5 219.0V225.4M985.5 219.0V225.4" fill="none" stroke="#ff00ff" stroke-width="1.05"/>
<line x1="242.4" y1="219" x2="242.4" y2="256" stroke="#ff30ff" stroke-width="1"/>
<line x1="307" y1="214" x2="307" y2="226" stroke="#ff30ff" stroke-width="1"/>
<line x1="262" y1="212" x2="262" y2="222" stroke="#ff30ff" stroke-width="1"/>
<line x1="662.6" y1="245" x2="662.6" y2="276" stroke="#ff30ff" stroke-width="1"/>
<line x1="680" y1="250" x2="680" y2="275" stroke="#ff30ff" stroke-width="1"/>
<line x1="600" y1="283" x2="600" y2="291" stroke="#ff30ff" stroke-width="1"/>
<line x1="552" y1="279" x2="552" y2="289" stroke="#ff30ff" stroke-width="1"/>
<line x1="701" y1="243" x2="701" y2="256" stroke="#ff30ff" stroke-width="1"/>
<line x1="717" y1="246" x2="717" y2="257" stroke="#ff30ff" stroke-width="1"/>
<line x1="819" y1="236" x2="819" y2="243" stroke="#ff30ff" stroke-width="1"/>
<line x1="742" y1="240" x2="742" y2="248" stroke="#ff30ff" stroke-width="1"/>
<line x1="265" y1="214.2" x2="266.6" y2="214.2" stroke="#ff40ff" stroke-width="1.4"/>
<line x1="268.5" y1="214.2" x2="270.1" y2="214.2" stroke="#ff40ff" stroke-width="1.4"/>
<line x1="271.5" y1="214.2" x2="273.1" y2="214.2" stroke="#ff40ff" stroke-width="1.4"/>
</g>
<rect x="55.4" y="125.8" width="1017.4" height="655.9000000000001" fill="none" stroke="#484848" stroke-width="1.15"/>
<line x1="48.4" y1="731.6" x2="1072.8" y2="731.6" stroke="#333" stroke-width="1.3"/>
<line x1="182.4" y1="731.0" x2="985" y2="731.0" stroke="#d41818" stroke-width="0.9"/>
<line x1="182.4" y1="731.6" x2="985" y2="731.6" stroke="#5a0000" stroke-width="1.3"/>
<line x1="55.4" y1="772.2" x2="55.4" y2="791.2" stroke="#46463c" stroke-width="1.1"/>
<line x1="55.4" y1="125.8" x2="55.4" y2="135.3" stroke="#46463c" stroke-width="1.1"/>
<line x1="73.89818181818181" y1="777.2" x2="73.89818181818181" y2="786.2" stroke="#46463c" stroke-width="1.1"/>
<line x1="73.89818181818181" y1="125.8" x2="73.89818181818181" y2="130.8" stroke="#46463c" stroke-width="1.1"/>
<line x1="92.39636363636363" y1="777.2" x2="92.39636363636363" y2="786.2" stroke="#46463c" stroke-width="1.1"/>
<line x1="92.39636363636363" y1="125.8" x2="92.39636363636363" y2="130.8" stroke="#46463c" stroke-width="1.1"/>
<line x1="110.89454545454544" y1="777.2" x2="110.89454545454544" y2="786.2" stroke="#46463c" stroke-width="1.1"/>
<line x1="110.89454545454544" y1="125.8" x2="110.89454545454544" y2="130.8" stroke="#46463c" stroke-width="1.1"/>
<line x1="129.39272727272726" y1="777.2" x2="129.39272727272726" y2="786.2" stroke="#46463c" stroke-width="1.1"/>
<line x1="129.39272727272726" y1="125.8" x2="129.39272727272726" y2="130.8" stroke="#46463c" stroke-width="1.1"/>
<line x1="147.89090909090908" y1="772.2" x2="147.89090909090908" y2="791.2" stroke="#46463c" stroke-width="1.1"/>
<line x1="147.89090909090908" y1="125.8" x2="147.89090909090908" y2="135.3" stroke="#46463c" stroke-width="1.1"/>
<line x1="166.3890909090909" y1="777.2" x2="166.3890909090909" y2="786.2" stroke="#46463c" stroke-width="1.1"/>
<line x1="166.3890909090909" y1="125.8" x2="166.3890909090909" y2="130.8" stroke="#46463c" stroke-width="1.1"/>
<line x1="184.88727272727272" y1="777.2" x2="184.88727272727272" y2="786.2" stroke="#46463c" stroke-width="1.1"/>
<line x1="184.88727272727272" y1="125.8" x2="184.88727272727272" y2="130.8" stroke="#46463c" stroke-width="1.1"/>
<line x1="203.38545454545454" y1="777.2" x2="203.38545454545454" y2="786.2" stroke="#46463c" stroke-width="1.1"/>
<line x1="203.38545454545454" y1="125.8" x2="203.38545454545454" y2="130.8" stroke="#46463c" stroke-width="1.1"/>
<line x1="221.88363636363636" y1="777.2" x2="221.88363636363636" y2="786.2" stroke="#46463c" stroke-width="1.1"/>
<line x1="221.88363636363636" y1="125.8" x2="221.88363636363636" y2="130.8" stroke="#46463c" stroke-width="1.1"/>
<line x1="240.38181818181818" y1="772.2" x2="240.38181818181818" y2="791.2" stroke="#46463c" stroke-width="1.1"/>
<line x1="240.38181818181818" y1="125.8" x2="240.38181818181818" y2="135.3" stroke="#46463c" stroke-width="1.1"/>
<line x1="258.88" y1="777.2" x2="258.88" y2="786.2" stroke="#46463c" stroke-width="1.1"/>
<line x1="258.88" y1="125.8" x2="258.88" y2="130.8" stroke="#46463c" stroke-width="1.1"/>
<line x1="277.37818181818176" y1="777.2" x2="277.37818181818176" y2="786.2" stroke="#46463c" stroke-width="1.1"/>
<line x1="277.37818181818176" y1="125.8" x2="277.37818181818176" y2="130.8" stroke="#46463c" stroke-width="1.1"/>
<line x1="295.8763636363636" y1="777.2" x2="295.8763636363636" y2="786.2" stroke="#46463c" stroke-width="1.1"/>
<line x1="295.8763636363636" y1="125.8" x2="295.8763636363636" y2="130.8" stroke="#46463c" stroke-width="1.1"/>
<line x1="314.3745454545454" y1="777.2" x2="314.3745454545454" y2="786.2" stroke="#46463c" stroke-width="1.1"/>
<line x1="314.3745454545454" y1="125.8" x2="314.3745454545454" y2="130.8" stroke="#46463c" stroke-width="1.1"/>
<line x1="332.8727272727272" y1="772.2" x2="332.8727272727272" y2="791.2" stroke="#46463c" stroke-width="1.1"/>
<line x1="332.8727272727272" y1="125.8" x2="332.8727272727272" y2="135.3" stroke="#46463c" stroke-width="1.1"/>
<line x1="351.37090909090904" y1="777.2" x2="351.37090909090904" y2="786.2" stroke="#46463c" stroke-width="1.1"/>
<line x1="351.37090909090904" y1="125.8" x2="351.37090909090904" y2="130.8" stroke="#46463c" stroke-width="1.1"/>
<line x1="369.86909090909086" y1="777.2" x2="369.86909090909086" y2="786.2" stroke="#46463c" stroke-width="1.1"/>
<line x1="369.86909090909086" y1="125.8" x2="369.86909090909086" y2="130.8" stroke="#46463c" stroke-width="1.1"/>
<line x1="388.3672727272727" y1="777.2" x2="388.3672727272727" y2="786.2" stroke="#46463c" stroke-width="1.1"/>
<line x1="388.3672727272727" y1="125.8" x2="388.3672727272727" y2="130.8" stroke="#46463c" stroke-width="1.1"/>
<line x1="406.8654545454545" y1="777.2" x2="406.8654545454545" y2="786.2" stroke="#46463c" stroke-width="1.1"/>
<line x1="406.8654545454545" y1="125.8" x2="406.8654545454545" y2="130.8" stroke="#46463c" stroke-width="1.1"/>
<line x1="425.3636363636363" y1="772.2" x2="425.3636363636363" y2="791.2" stroke="#46463c" stroke-width="1.1"/>
<line x1="425.3636363636363" y1="125.8" x2="425.3636363636363" y2="135.3" stroke="#46463c" stroke-width="1.1"/>
<line x1="443.86181818181814" y1="777.2" x2="443.86181818181814" y2="786.2" stroke="#46463c" stroke-width="1.1"/>
<line x1="443.86181818181814" y1="125.8" x2="443.86181818181814" y2="130.8" stroke="#46463c" stroke-width="1.1"/>
<line x1="462.35999999999996" y1="777.2" x2="462.35999999999996" y2="786.2" stroke="#46463c" stroke-width="1.1"/>
<line x1="462.35999999999996" y1="125.8" x2="462.35999999999996" y2="130.8" stroke="#46463c" stroke-width="1.1"/>
<line x1="480.8581818181818" y1="777.2" x2="480.8581818181818" y2="786.2" stroke="#46463c" stroke-width="1.1"/>
<line x1="480.8581818181818" y1="125.8" x2="480.8581818181818" y2="130.8" stroke="#46463c" stroke-width="1.1"/>
<line x1="499.35636363636354" y1="777.2" x2="499.35636363636354" y2="786.2" stroke="#46463c" stroke-width="1.1"/>
<line x1="499.35636363636354" y1="125.8" x2="499.35636363636354" y2="130.8" stroke="#46463c" stroke-width="1.1"/>
<line x1="517.8545454545454" y1="772.2" x2="517.8545454545454" y2="791.2" stroke="#46463c" stroke-width="1.1"/>
<line x1="517.8545454545454" y1="125.8" x2="517.8545454545454" y2="135.3" stroke="#46463c" stroke-width="1.1"/>
<line x1="536.3527272727272" y1="777.2" x2="536.3527272727272" y2="786.2" stroke="#46463c" stroke-width="1.1"/>
<line x1="536.3527272727272" y1="125.8" x2="536.3527272727272" y2="130.8" stroke="#46463c" stroke-width="1.1"/>
<line x1="554.850909090909" y1="777.2" x2="554.850909090909" y2="786.2" stroke="#46463c" stroke-width="1.1"/>
<line x1="554.850909090909" y1="125.8" x2="554.850909090909" y2="130.8" stroke="#46463c" stroke-width="1.1"/>
<line x1="573.3490909090908" y1="777.2" x2="573.3490909090908" y2="786.2" stroke="#46463c" stroke-width="1.1"/>
<line x1="573.3490909090908" y1="125.8" x2="573.3490909090908" y2="130.8" stroke="#46463c" stroke-width="1.1"/>
<line x1="591.8472727272726" y1="777.2" x2="591.8472727272726" y2="786.2" stroke="#46463c" stroke-width="1.1"/>
<line x1="591.8472727272726" y1="125.8" x2="591.8472727272726" y2="130.8" stroke="#46463c" stroke-width="1.1"/>
<line x1="610.3454545454545" y1="772.2" x2="610.3454545454545" y2="791.2" stroke="#46463c" stroke-width="1.1"/>
<line x1="610.3454545454545" y1="125.8" x2="610.3454545454545" y2="135.3" stroke="#46463c" stroke-width="1.1"/>
<line x1="628.8436363636363" y1="777.2" x2="628.8436363636363" y2="786.2" stroke="#46463c" stroke-width="1.1"/>
<line x1="628.8436363636363" y1="125.8" x2="628.8436363636363" y2="130.8" stroke="#46463c" stroke-width="1.1"/>
<line x1="647.3418181818181" y1="777.2" x2="647.3418181818181" y2="786.2" stroke="#46463c" stroke-width="1.1"/>
<line x1="647.3418181818181" y1="125.8" x2="647.3418181818181" y2="130.8" stroke="#46463c" stroke-width="1.1"/>
<line x1="665.8399999999999" y1="777.2" x2="665.8399999999999" y2="786.2" stroke="#46463c" stroke-width="1.1"/>
<line x1="665.8399999999999" y1="125.8" x2="665.8399999999999" y2="130.8" stroke="#46463c" stroke-width="1.1"/>
<line x1="684.3381818181817" y1="777.2" x2="684.3381818181817" y2="786.2" stroke="#46463c" stroke-width="1.1"/>
<line x1="684.3381818181817" y1="125.8" x2="684.3381818181817" y2="130.8" stroke="#46463c" stroke-width="1.1"/>
<line x1="702.8363636363636" y1="772.2" x2="702.8363636363636" y2="791.2" stroke="#46463c" stroke-width="1.1"/>
<line x1="702.8363636363636" y1="125.8" x2="702.8363636363636" y2="135.3" stroke="#46463c" stroke-width="1.1"/>
<line x1="721.3345454545454" y1="777.2" x2="721.3345454545454" y2="786.2" stroke="#46463c" stroke-width="1.1"/>
<line x1="721.3345454545454" y1="125.8" x2="721.3345454545454" y2="130.8" stroke="#46463c" stroke-width="1.1"/>
<line x1="739.8327272727272" y1="777.2" x2="739.8327272727272" y2="786.2" stroke="#46463c" stroke-width="1.1"/>
<line x1="739.8327272727272" y1="125.8" x2="739.8327272727272" y2="130.8" stroke="#46463c" stroke-width="1.1"/>
<line x1="758.330909090909" y1="777.2" x2="758.330909090909" y2="786.2" stroke="#46463c" stroke-width="1.1"/>
<line x1="758.330909090909" y1="125.8" x2="758.330909090909" y2="130.8" stroke="#46463c" stroke-width="1.1"/>
<line x1="776.8290909090908" y1="777.2" x2="776.8290909090908" y2="786.2" stroke="#46463c" stroke-width="1.1"/>
<line x1="776.8290909090908" y1="125.8" x2="776.8290909090908" y2="130.8" stroke="#46463c" stroke-width="1.1"/>
<line x1="795.3272727272727" y1="772.2" x2="795.3272727272727" y2="791.2" stroke="#46463c" stroke-width="1.1"/>
<line x1="795.3272727272727" y1="125.8" x2="795.3272727272727" y2="135.3" stroke="#46463c" stroke-width="1.1"/>
<line x1="813.8254545454545" y1="777.2" x2="813.8254545454545" y2="786.2" stroke="#46463c" stroke-width="1.1"/>
<line x1="813.8254545454545" y1="125.8" x2="813.8254545454545" y2="130.8" stroke="#46463c" stroke-width="1.1"/>
<line x1="832.3236363636363" y1="777.2" x2="832.3236363636363" y2="786.2" stroke="#46463c" stroke-width="1.1"/>
<line x1="832.3236363636363" y1="125.8" x2="832.3236363636363" y2="130.8" stroke="#46463c" stroke-width="1.1"/>
<line x1="850.8218181818181" y1="777.2" x2="850.8218181818181" y2="786.2" stroke="#46463c" stroke-width="1.1"/>
<line x1="850.8218181818181" y1="125.8" x2="850.8218181818181" y2="130.8" stroke="#46463c" stroke-width="1.1"/>
<line x1="869.3199999999999" y1="777.2" x2="869.3199999999999" y2="786.2" stroke="#46463c" stroke-width="1.1"/>
<line x1="869.3199999999999" y1="125.8" x2="869.3199999999999" y2="130.8" stroke="#46463c" stroke-width="1.1"/>
<line x1="887.8181818181818" y1="772.2" x2="887.8181818181818" y2="791.2" stroke="#46463c" stroke-width="1.1"/>
<line x1="887.8181818181818" y1="125.8" x2="887.8181818181818" y2="135.3" stroke="#46463c" stroke-width="1.1"/>
<line x1="906.3163636363636" y1="777.2" x2="906.3163636363636" y2="786.2" stroke="#46463c" stroke-width="1.1"/>
<line x1="906.3163636363636" y1="125.8" x2="906.3163636363636" y2="130.8" stroke="#46463c" stroke-width="1.1"/>
<line x1="924.8145454545454" y1="777.2" x2="924.8145454545454" y2="786.2" stroke="#46463c" stroke-width="1.1"/>
<line x1="924.8145454545454" y1="125.8" x2="924.8145454545454" y2="130.8" stroke="#46463c" stroke-width="1.1"/>
<line x1="943.3127272727271" y1="777.2" x2="943.3127272727271" y2="786.2" stroke="#46463c" stroke-width="1.1"/>
<line x1="943.3127272727271" y1="125.8" x2="943.3127272727271" y2="130.8" stroke="#46463c" stroke-width="1.1"/>
<line x1="961.8109090909089" y1="777.2" x2="961.8109090909089" y2="786.2" stroke="#46463c" stroke-width="1.1"/>
<line x1="961.8109090909089" y1="125.8" x2="961.8109090909089" y2="130.8" stroke="#46463c" stroke-width="1.1"/>
<line x1="980.3090909090907" y1="772.2" x2="980.3090909090907" y2="791.2" stroke="#46463c" stroke-width="1.1"/>
<line x1="980.3090909090907" y1="125.8" x2="980.3090909090907" y2="135.3" stroke="#46463c" stroke-width="1.1"/>
<line x1="998.8072727272726" y1="777.2" x2="998.8072727272726" y2="786.2" stroke="#46463c" stroke-width="1.1"/>
<line x1="998.8072727272726" y1="125.8" x2="998.8072727272726" y2="130.8" stroke="#46463c" stroke-width="1.1"/>
<line x1="1017.3054545454544" y1="777.2" x2="1017.3054545454544" y2="786.2" stroke="#46463c" stroke-width="1.1"/>
<line x1="1017.3054545454544" y1="125.8" x2="1017.3054545454544" y2="130.8" stroke="#46463c" stroke-width="1.1"/>
<line x1="1035.8036363636363" y1="777.2" x2="1035.8036363636363" y2="786.2" stroke="#46463c" stroke-width="1.1"/>
<line x1="1035.8036363636363" y1="125.8" x2="1035.8036363636363" y2="130.8" stroke="#46463c" stroke-width="1.1"/>
<line x1="1054.3018181818181" y1="777.2" x2="1054.3018181818181" y2="786.2" stroke="#46463c" stroke-width="1.1"/>
<line x1="1054.3018181818181" y1="125.8" x2="1054.3018181818181" y2="130.8" stroke="#46463c" stroke-width="1.1"/>
<line x1="1072.8" y1="772.2" x2="1072.8" y2="791.2" stroke="#46463c" stroke-width="1.1"/>
<line x1="1072.8" y1="125.8" x2="1072.8" y2="135.3" stroke="#46463c" stroke-width="1.1"/>
<line x1="51.9" y1="759.505" x2="59.4" y2="759.505" stroke="#46463c" stroke-width="1.1"/>
<line x1="1068.8" y1="759.505" x2="1072.8" y2="759.505" stroke="#46463c" stroke-width="1.1"/>
<line x1="48.4" y1="731.6" x2="62.9" y2="731.6" stroke="#46463c" stroke-width="1.2"/>
<line x1="1064.8" y1="731.6" x2="1072.8" y2="731.6" stroke="#46463c" stroke-width="1.2"/>
<line x1="51.9" y1="703.695" x2="59.4" y2="703.695" stroke="#46463c" stroke-width="1.1"/>
<line x1="1068.8" y1="703.695" x2="1072.8" y2="703.695" stroke="#46463c" stroke-width="1.1"/>
<line x1="51.9" y1="675.79" x2="59.4" y2="675.79" stroke="#46463c" stroke-width="1.1"/>
<line x1="1068.8" y1="675.79" x2="1072.8" y2="675.79" stroke="#46463c" stroke-width="1.1"/>
<line x1="51.9" y1="647.885" x2="59.4" y2="647.885" stroke="#46463c" stroke-width="1.1"/>
<line x1="1068.8" y1="647.885" x2="1072.8" y2="647.885" stroke="#46463c" stroke-width="1.1"/>
<line x1="51.9" y1="619.98" x2="59.4" y2="619.98" stroke="#46463c" stroke-width="1.1"/>
<line x1="1068.8" y1="619.98" x2="1072.8" y2="619.98" stroke="#46463c" stroke-width="1.1"/>
<line x1="48.4" y1="592.075" x2="62.9" y2="592.075" stroke="#46463c" stroke-width="1.2"/>
<line x1="1064.8" y1="592.075" x2="1072.8" y2="592.075" stroke="#46463c" stroke-width="1.2"/>
<line x1="51.9" y1="564.1700000000001" x2="59.4" y2="564.1700000000001" stroke="#46463c" stroke-width="1.1"/>
<line x1="1068.8" y1="564.1700000000001" x2="1072.8" y2="564.1700000000001" stroke="#46463c" stroke-width="1.1"/>
<line x1="51.9" y1="536.265" x2="59.4" y2="536.265" stroke="#46463c" stroke-width="1.1"/>
<line x1="1068.8" y1="536.265" x2="1072.8" y2="536.265" stroke="#46463c" stroke-width="1.1"/>
<line x1="51.9" y1="508.36" x2="59.4" y2="508.36" stroke="#46463c" stroke-width="1.1"/>
<line x1="1068.8" y1="508.36" x2="1072.8" y2="508.36" stroke="#46463c" stroke-width="1.1"/>
<line x1="51.9" y1="480.45500000000004" x2="59.4" y2="480.45500000000004" stroke="#46463c" stroke-width="1.1"/>
<line x1="1068.8" y1="480.45500000000004" x2="1072.8" y2="480.45500000000004" stroke="#46463c" stroke-width="1.1"/>
<line x1="48.4" y1="452.55" x2="62.9" y2="452.55" stroke="#46463c" stroke-width="1.2"/>
<line x1="1064.8" y1="452.55" x2="1072.8" y2="452.55" stroke="#46463c" stroke-width="1.2"/>
<line x1="51.9" y1="424.645" x2="59.4" y2="424.645" stroke="#46463c" stroke-width="1.1"/>
<line x1="1068.8" y1="424.645" x2="1072.8" y2="424.645" stroke="#46463c" stroke-width="1.1"/>
<line x1="51.9" y1="396.74" x2="59.4" y2="396.74" stroke="#46463c" stroke-width="1.1"/>
<line x1="1068.8" y1="396.74" x2="1072.8" y2="396.74" stroke="#46463c" stroke-width="1.1"/>
<line x1="51.9" y1="368.83500000000004" x2="59.4" y2="368.83500000000004" stroke="#46463c" stroke-width="1.1"/>
<line x1="1068.8" y1="368.83500000000004" x2="1072.8" y2="368.83500000000004" stroke="#46463c" stroke-width="1.1"/>
<line x1="51.9" y1="340.93" x2="59.4" y2="340.93" stroke="#46463c" stroke-width="1.1"/>
<line x1="1068.8" y1="340.93" x2="1072.8" y2="340.93" stroke="#46463c" stroke-width="1.1"/>
<line x1="48.4" y1="313.025" x2="62.9" y2="313.025" stroke="#46463c" stroke-width="1.2"/>
<line x1="1064.8" y1="313.025" x2="1072.8" y2="313.025" stroke="#46463c" stroke-width="1.2"/>
<line x1="51.9" y1="285.12" x2="59.4" y2="285.12" stroke="#46463c" stroke-width="1.1"/>
<line x1="1068.8" y1="285.12" x2="1072.8" y2="285.12" stroke="#46463c" stroke-width="1.1"/>
<line x1="51.9" y1="257.21500000000003" x2="59.4" y2="257.21500000000003" stroke="#46463c" stroke-width="1.1"/>
<line x1="1068.8" y1="257.21500000000003" x2="1072.8" y2="257.21500000000003" stroke="#46463c" stroke-width="1.1"/>
<line x1="51.9" y1="229.31" x2="59.4" y2="229.31" stroke="#46463c" stroke-width="1.1"/>
<line x1="1068.8" y1="229.31" x2="1072.8" y2="229.31" stroke="#46463c" stroke-width="1.1"/>
<line x1="51.9" y1="201.40499999999997" x2="59.4" y2="201.40499999999997" stroke="#46463c" stroke-width="1.1"/>
<line x1="1068.8" y1="201.40499999999997" x2="1072.8" y2="201.40499999999997" stroke="#46463c" stroke-width="1.1"/>
<line x1="48.4" y1="173.5" x2="62.9" y2="173.5" stroke="#46463c" stroke-width="1.2"/>
<line x1="1064.8" y1="173.5" x2="1072.8" y2="173.5" stroke="#46463c" stroke-width="1.2"/>
<line x1="51.9" y1="145.59500000000003" x2="59.4" y2="145.59500000000003" stroke="#46463c" stroke-width="1.1"/>
<line x1="1068.8" y1="145.59500000000003" x2="1072.8" y2="145.59500000000003" stroke="#46463c" stroke-width="1.1"/>
<line x1="260.6" y1="198" x2="260.6" y2="217" stroke="#000" stroke-width="1.5"/>
<line x1="253" y1="207.5" x2="268" y2="207.5" stroke="#000" stroke-width="1.5"/>
<rect x="263.2" y="219.4" width="109" height="15" fill="#9a9a9a" rx="3" opacity="0.45"/>
<rect x="262" y="218" width="109.3" height="15" fill="#ffffff" stroke="#dcdcdc" stroke-width="0.8" rx="3"/>
<text x="264.8" y="228.1" font-family="'Liberation Sans', sans-serif" font-size="9.2" stroke="#575757" stroke-width="0.2" fill="#575757" textLength="102.2" lengthAdjust="spacingAndGlyphs">2023-11-19 14.56.20, value: 18,5</text>
<text x="297.6" y="547.2" font-family="'Liberation Serif', serif" font-size="17" font-weight="bold" stroke="#101010" stroke-width="0.2" fill="#101010" textLength="647.9" lengthAdjust="spacingAndGlyphs">Just after Synchronous nanocorrection I reached the peak quality SNR=18,5 dB</text>
<text x="301.2" y="569.0" font-family="'Liberation Serif', serif" font-size="17" font-weight="bold" stroke="#101010" stroke-width="0.2" fill="#101010" textLength="299.3" lengthAdjust="spacingAndGlyphs">per unit of measurements t=24 hours</text>
<rect x="1084.6" y="76.6" width="112.60000000000014" height="700.8" fill="none" stroke="#ffffff" stroke-width="1"/>
<rect x="1083.6" y="75.6" width="112.60000000000014" height="700.8" fill="none" stroke="#e4e4e4" stroke-width="1"/>
<rect x="1087" y="70" width="57.5" height="10" fill="#f0f0f0"/>
<text x="1088.9" y="78.2" font-family="'Liberation Sans', sans-serif" font-size="9.2" stroke="#1c1c9c" stroke-width="0.2" fill="#1c1c9c" textLength="53.4" lengthAdjust="spacingAndGlyphs">Transponder [BS]</text>
<text x="1088.9" y="105.1" font-family="'Liberation Sans', sans-serif" font-size="9" stroke="#3c3c3c" stroke-width="0.2" fill="#3c3c3c" textLength="34.1" lengthAdjust="spacingAndGlyphs">Frequency:</text>
<text x="1138.4" y="104.7" font-family="'Liberation Sans', sans-serif" font-size="8.8" font-weight="bold" stroke="#2f8a3c" stroke-width="0.2" fill="#2f8a3c" textLength="48.8" lengthAdjust="spacingAndGlyphs">12584,875 MHz</text>
<text x="1088.9" y="142.1" font-family="'Liberation Sans', sans-serif" font-size="9" stroke="#3c3c3c" stroke-width="0.2" fill="#3c3c3c" textLength="39.3" lengthAdjust="spacingAndGlyphs">Polarization:</text>
<text x="1138.4" y="141.7" font-family="'Liberation Sans', sans-serif" font-size="8.8" font-weight="bold" stroke="#2f8a3c" stroke-width="0.2" fill="#2f8a3c" textLength="33.3" lengthAdjust="spacingAndGlyphs">Horizontal</text>
<text x="1088.9" y="179.2" font-family="'Liberation Sans', sans-serif" font-size="9" stroke="#3c3c3c" stroke-width="0.2" fill="#3c3c3c" textLength="41.1" lengthAdjust="spacingAndGlyphs">Symbol Rate:</text>
<text x="1138.4" y="178.8" font-family="'Liberation Sans', sans-serif" font-size="8.8" font-weight="bold" stroke="#2f8a3c" stroke-width="0.2" fill="#2f8a3c" textLength="48.2" lengthAdjust="spacingAndGlyphs">35496,397 KS/s</text>
<text x="1088.9" y="216.2" font-family="'Liberation Sans', sans-serif" font-size="9" stroke="#3c3c3c" stroke-width="0.2" fill="#3c3c3c" textLength="30.4" lengthAdjust="spacingAndGlyphs">Standard:</text>
<text x="1138.4" y="215.8" font-family="'Liberation Sans', sans-serif" font-size="8.8" font-weight="bold" stroke="#2f8a3c" stroke-width="0.2" fill="#2f8a3c" textLength="23.3" lengthAdjust="spacingAndGlyphs">DVB-S2</text>
<text x="1088.9" y="253.2" font-family="'Liberation Sans', sans-serif" font-size="9" stroke="#3c3c3c" stroke-width="0.2" fill="#3c3c3c" textLength="39.7" lengthAdjust="spacingAndGlyphs">Modulation:</text>
<text x="1138.4" y="252.8" font-family="'Liberation Sans', sans-serif" font-size="8.8" font-weight="bold" stroke="#2f8a3c" stroke-width="0.2" fill="#2f8a3c" textLength="15.6" lengthAdjust="spacingAndGlyphs">8PSK</text>
<text x="1088.9" y="290.2" font-family="'Liberation Sans', sans-serif" font-size="9" stroke="#3c3c3c" stroke-width="0.2" fill="#3c3c3c" textLength="13.4" lengthAdjust="spacingAndGlyphs">FEC:</text>
<text x="1138.4" y="289.9" font-family="'Liberation Sans', sans-serif" font-size="8.8" font-weight="bold" stroke="#2f8a3c" stroke-width="0.2" fill="#2f8a3c" textLength="9.9" lengthAdjust="spacingAndGlyphs">2/3</text>
<text x="1088.9" y="327.3" font-family="'Liberation Sans', sans-serif" font-size="9" stroke="#3c3c3c" stroke-width="0.2" fill="#3c3c3c" textLength="24.6" lengthAdjust="spacingAndGlyphs">RollOff:</text>
<text x="1138.4" y="326.9" font-family="'Liberation Sans', sans-serif" font-size="8.8" font-weight="bold" stroke="#2f8a3c" stroke-width="0.2" fill="#2f8a3c" textLength="13.0" lengthAdjust="spacingAndGlyphs">0.20</text>
<text x="1088.9" y="364.3" font-family="'Liberation Sans', sans-serif" font-size="9" stroke="#3c3c3c" stroke-width="0.2" fill="#3c3c3c" textLength="16.1" lengthAdjust="spacingAndGlyphs">Pilot:</text>
<text x="1138.4" y="363.9" font-family="'Liberation Sans', sans-serif" font-size="8.8" font-weight="bold" stroke="#2f8a3c" stroke-width="0.2" fill="#2f8a3c" textLength="10.2" lengthAdjust="spacingAndGlyphs">ON</text>
<text x="1088.9" y="401.3" font-family="'Liberation Sans', sans-serif" font-size="9" stroke="#3c3c3c" stroke-width="0.2" fill="#3c3c3c" textLength="31.5" lengthAdjust="spacingAndGlyphs">Spectrum:</text>
<text x="1138.4" y="400.9" font-family="'Liberation Sans', sans-serif" font-size="8.8" font-weight="bold" stroke="#2f8a3c" stroke-width="0.2" fill="#2f8a3c" textLength="26.4" lengthAdjust="spacingAndGlyphs">Inverted</text>
<text x="1088.9" y="438.4" font-family="'Liberation Sans', sans-serif" font-size="9" stroke="#3c3c3c" stroke-width="0.2" fill="#3c3c3c" textLength="37.3" lengthAdjust="spacingAndGlyphs">Frame Type:</text>
<text x="1138.4" y="438.0" font-family="'Liberation Sans', sans-serif" font-size="8.8" font-weight="bold" stroke="#2f8a3c" stroke-width="0.2" fill="#2f8a3c" textLength="38.2" lengthAdjust="spacingAndGlyphs">Long Frame</text>
<text x="1088.9" y="475.4" font-family="'Liberation Sans', sans-serif" font-size="9" stroke="#3c3c3c" stroke-width="0.2" fill="#3c3c3c" textLength="39.1" lengthAdjust="spacingAndGlyphs">Code Mode:</text>
<text x="1138.4" y="475.0" font-family="'Liberation Sans', sans-serif" font-size="8.8" font-weight="bold" stroke="#2f8a3c" stroke-width="0.2" fill="#2f8a3c" textLength="15.1" lengthAdjust="spacingAndGlyphs">CCM</text>
<text x="1088.9" y="512.4" font-family="'Liberation Sans', sans-serif" font-size="9" stroke="#3c3c3c" stroke-width="0.2" fill="#3c3c3c" textLength="39.1" lengthAdjust="spacingAndGlyphs">Stream type:</text>
<text x="1138.4" y="512.0" font-family="'Liberation Sans', sans-serif" font-size="8.8" font-weight="bold" stroke="#2f8a3c" stroke-width="0.2" fill="#2f8a3c" textLength="30.6" lengthAdjust="spacingAndGlyphs">Transport</text>
<text x="1088.9" y="549.5" font-family="'Liberation Sans', sans-serif" font-size="9" stroke="#3c3c3c" stroke-width="0.2" fill="#3c3c3c" textLength="13.9" lengthAdjust="spacingAndGlyphs">ISSYI</text>
<text x="1138.4" y="549.1" font-family="'Liberation Sans', sans-serif" font-size="8.8" font-weight="bold" stroke="#2f8a3c" stroke-width="0.2" fill="#2f8a3c" textLength="10.2" lengthAdjust="spacingAndGlyphs">ON</text>
<text x="1088.9" y="586.5" font-family="'Liberation Sans', sans-serif" font-size="9" stroke="#3c3c3c" stroke-width="0.2" fill="#3c3c3c" textLength="15.5" lengthAdjust="spacingAndGlyphs">NPD:</text>
<text x="1138.4" y="586.1" font-family="'Liberation Sans', sans-serif" font-size="8.8" font-weight="bold" stroke="#2f8a3c" stroke-width="0.2" fill="#2f8a3c" textLength="11.9" lengthAdjust="spacingAndGlyphs">OFF</text>
<text x="1088.9" y="623.5" font-family="'Liberation Sans', sans-serif" font-size="9" stroke="#3c3c3c" stroke-width="0.2" fill="#3c3c3c" textLength="27.4" lengthAdjust="spacingAndGlyphs">RF Level:</text>
<text x="1138.4" y="623.1" font-family="'Liberation Sans', sans-serif" font-size="8.8" font-weight="bold" stroke="#2f8a3c" stroke-width="0.2" fill="#2f8a3c" textLength="26.8" lengthAdjust="spacingAndGlyphs">-32 dBm</text>
<text x="1088.9" y="660.6" font-family="'Liberation Sans', sans-serif" font-size="9" stroke="#3c3c3c" stroke-width="0.2" fill="#3c3c3c" textLength="23.9" lengthAdjust="spacingAndGlyphs">BitRate:</text>
<text x="1138.4" y="660.2" font-family="'Liberation Sans', sans-serif" font-size="8.8" font-weight="bold" stroke="#2f8a3c" stroke-width="0.2" fill="#2f8a3c" textLength="44.2" lengthAdjust="spacingAndGlyphs">70,318 Mbit/s</text>
<text x="1088.9" y="697.6" font-family="'Liberation Sans', sans-serif" font-size="9" stroke="#3c3c3c" stroke-width="0.2" fill="#3c3c3c" textLength="42.4" lengthAdjust="spacingAndGlyphs">CarrierWidth:</text>
<text x="1138.4" y="697.2" font-family="'Liberation Sans', sans-serif" font-size="8.8" font-weight="bold" stroke="#2f8a3c" stroke-width="0.2" fill="#2f8a3c" textLength="37.4" lengthAdjust="spacingAndGlyphs">42,595 MHz</text>
<text x="1088.9" y="746.6" font-family="'Liberation Sans', sans-serif" font-size="9" stroke="#3c3c3c" stroke-width="0.2" fill="#3c3c3c" textLength="23.1" lengthAdjust="spacingAndGlyphs">MIS (2):</text>
<rect x="1138.4" y="735.8" width="46" height="15.4" fill="#ffffff" stroke="#d8d8d8" stroke-width="1" rx="1.5"/>
<text x="1141.2" y="747.0" font-family="'Liberation Sans', sans-serif" font-size="9.4" stroke="#111" stroke-width="0.2" fill="#111" textLength="4.2" lengthAdjust="spacingAndGlyphs">1</text>
<path d="M1176.3 742.2 L1179.2 745.2 L1182.1 742.2" fill="none" stroke="#555" stroke-width="0.9"/>
<rect x="1084.5" y="784.8" width="111.3" height="19.4" fill="#fdfdfd" stroke="#dcdcdc" stroke-width="1" rx="2.2"/>
<line x1="1087" y1="804.3" x2="1193.4" y2="804.3" stroke="#c2c2c2" stroke-width="1"/>
<rect x="1135.3" y="788.2" width="9.4" height="11.4" fill="#ffffff" stroke="#9098a4" stroke-width="0.8"/>
<rect x="1135.7" y="788.6" width="8.6" height="2.3" fill="#d4efff"/>
<rect x="1135.3" y="790.9" width="9.4" height="2.4" fill="#2f6db0"/>
<rect x="1135.7" y="796.1" width="8.6" height="1.1" fill="#bfb0a2"/>
<line x1="1135" y1="799.5" x2="1145" y2="799.5" stroke="#6e747c" stroke-width="1.1"/>
<rect x="6.5" y="813.6" width="78.0" height="15" fill="#e6e6e6"/>
<rect x="6.5" y="814.1" width="78.0" height="14" fill="url(#gG)"/>
<rect x="6.5" y="813.6" width="78.0" height="15" fill="none" stroke="#bcbcbc" stroke-width="1" rx="1.5"/>
<rect x="6.5" y="832.8" width="78.0" height="15" fill="#e6e6e6"/>
<rect x="6.5" y="833.3" width="78.0" height="14" fill="url(#gG)"/>
<rect x="6.5" y="832.8" width="78.0" height="15" fill="none" stroke="#bcbcbc" stroke-width="1" rx="1.5"/>
<rect x="87.6" y="813.6" width="511.0" height="15" fill="#e6e6e6"/>
<rect x="87.6" y="814.1" width="51.400000000000006" height="14" fill="url(#gR)"/>
<rect x="139" y="814.1" width="205" height="14" fill="url(#gY)"/>
<rect x="344" y="814.1" width="209.39999999999998" height="14" fill="url(#gG)"/>
<rect x="553.4" y="814.1" width="45.200000000000045" height="14" fill="url(#gE)"/>
<rect x="87.6" y="813.6" width="511.0" height="15" fill="none" stroke="#bcbcbc" stroke-width="1" rx="1.5"/>
<rect x="87.6" y="832.8" width="511.0" height="15" fill="#e6e6e6"/>
<rect x="87.6" y="833.3" width="51.400000000000006" height="14" fill="url(#gR)"/>
<rect x="139" y="833.3" width="205" height="14" fill="url(#gY)"/>
<rect x="344" y="833.3" width="254.60000000000002" height="14" fill="url(#gG)"/>
<rect x="87.6" y="832.8" width="511.0" height="15" fill="none" stroke="#bcbcbc" stroke-width="1" rx="1.5"/>
<rect x="602" y="813.6" width="511.29999999999995" height="15" fill="#e6e6e6"/>
<rect x="602" y="814.1" width="110" height="14" fill="url(#gR)"/>
<rect x="712" y="814.1" width="182.79999999999995" height="14" fill="url(#gY)"/>
<rect x="894.8" y="814.1" width="218.5" height="14" fill="url(#gG)"/>
<rect x="602" y="813.6" width="511.29999999999995" height="15" fill="none" stroke="#bcbcbc" stroke-width="1" rx="1.5"/>
<rect x="602" y="832.8" width="511.29999999999995" height="15" fill="#e6e6e6"/>
<rect x="602" y="833.3" width="168.79999999999995" height="14" fill="url(#gR)"/>
<rect x="770.8" y="833.3" width="129.20000000000005" height="14" fill="url(#gY)"/>
<rect x="900" y="833.3" width="165" height="14" fill="url(#gG)"/>
<rect x="1065" y="833.3" width="48.299999999999955" height="14" fill="url(#gE)"/>
<rect x="602" y="832.8" width="511.29999999999995" height="15" fill="none" stroke="#bcbcbc" stroke-width="1" rx="1.5"/>
<rect x="1116.3" y="813.6" width="79.5" height="15" fill="#e6e6e6"/>
<rect x="1116.3" y="814.1" width="79.5" height="14" fill="url(#gG)"/>
<rect x="1116.3" y="813.6" width="79.5" height="15" fill="none" stroke="#bcbcbc" stroke-width="1" rx="1.5"/>
<rect x="1116.3" y="832.8" width="79.5" height="15" fill="#e6e6e6"/>
<rect x="1116.3" y="833.3" width="79.5" height="14" fill="url(#gG)"/>
<rect x="1116.3" y="832.8" width="79.5" height="15" fill="none" stroke="#bcbcbc" stroke-width="1" rx="1.5"/>
<text x="8.3" y="824.6" font-family="'Liberation Sans', sans-serif" font-size="8.8" stroke="#1a1a1a" stroke-width="0.3" fill="#1a1a1a" textLength="23.0" lengthAdjust="spacingAndGlyphs">Present</text>
<text x="8.3" y="843.8" font-family="'Liberation Sans', sans-serif" font-size="8.8" stroke="#1a1a1a" stroke-width="0.3" fill="#1a1a1a" textLength="14.1" lengthAdjust="spacingAndGlyphs">Lock</text>
<text x="91.3" y="824.6" font-family="'Liberation Sans', sans-serif" font-size="8.8" stroke="#1a1a1a" stroke-width="0.3" fill="#1a1a1a" textLength="31.7" lengthAdjust="spacingAndGlyphs">Level: 91%</text>
<text x="91.3" y="843.8" font-family="'Liberation Sans', sans-serif" font-size="8.8" stroke="#1a1a1a" stroke-width="0.3" fill="#1a1a1a" textLength="41.3" lengthAdjust="spacingAndGlyphs">Quality: 100%</text>
<text x="604.0" y="824.6" font-family="'Liberation Sans', sans-serif" font-size="8.8" stroke="#1a1a1a" stroke-width="0.3" fill="#1a1a1a" textLength="38.7" lengthAdjust="spacingAndGlyphs">BER: &lt;1.0E-7</text>
<text x="605.9" y="843.8" font-family="'Liberation Sans', sans-serif" font-size="8.8" stroke="#1a1a1a" stroke-width="0.3" fill="#1a1a1a" textLength="131.4" lengthAdjust="spacingAndGlyphs">SNR: 18,1 dB (Margin: 11,5 dB | Very Good)</text>
<text x="1118.3" y="824.6" font-family="'Liberation Sans', sans-serif" font-size="8.8" stroke="#1a1a1a" stroke-width="0.3" fill="#1a1a1a" textLength="63.7" lengthAdjust="spacingAndGlyphs">Input (~21,39 Mbps)</text>
<text x="1118.3" y="843.8" font-family="'Liberation Sans', sans-serif" font-size="8.8" stroke="#1a1a1a" stroke-width="0.3" fill="#1a1a1a" textLength="23.5" lengthAdjust="spacingAndGlyphs">Sync TS</text>
<line x1="0" y1="852.8" x2="1200" y2="852.8" stroke="#dedede" stroke-width="1"/>
<line x1="394.7" y1="856" x2="394.7" y2="870" stroke="#b4b4b4" stroke-width="1"/>
<line x1="794" y1="856" x2="794" y2="870" stroke="#b4b4b4" stroke-width="1"/>
<line x1="1191" y1="856" x2="1191" y2="870" stroke="#b4b4b4" stroke-width="1"/>
<text x="152.0" y="866.0" font-family="'Liberation Sans', sans-serif" font-size="9.2" stroke="#1a1a1a" stroke-width="0.2" fill="#1a1a1a" textLength="92.5" lengthAdjust="spacingAndGlyphs">Locked -&gt; Uptime: 24:07:05</text>
<text x="550.7" y="866.0" font-family="'Liberation Sans', sans-serif" font-size="9.2" stroke="#1a1a1a" stroke-width="0.2" fill="#1a1a1a" textLength="90.1" lengthAdjust="spacingAndGlyphs">SYNC 364 | TEI 4 | CC 10811</text>
<text x="929.5" y="866.0" font-family="'Liberation Sans', sans-serif" font-size="9.2" stroke="#1a1a1a" stroke-width="0.2" fill="#1a1a1a" textLength="127.5" lengthAdjust="spacingAndGlyphs">Best signal: 18,5 dB (2023-11-19 14:43)</text>
<rect x="1197" y="867" width="1.4" height="1.4" fill="#b8b8b8"/>
<rect x="1194" y="867" width="1.4" height="1.4" fill="#b8b8b8"/>
<rect x="1197" y="864" width="1.4" height="1.4" fill="#b8b8b8"/>
<g>
<rect x="546" y="0" width="107.8" height="103.6" fill="#fcfcfe"/>
<rect x="546" y="0" width="107.8" height="22.6" fill="#f6f6fb"/>
<path d="M563.2 83.0 A47.2 47.2 0 0 1 631.2 18.4" fill="none" stroke="#3a3b86" stroke-width="2.1"/>
<path d="M634.3 21.2 A47.2 47.2 0 0 1 648.0 57.9" fill="none" stroke="#4043a0" stroke-width="3.8"/>
<path d="M647.6 61.2 A47.2 47.2 0 0 1 635.1 87.1" fill="none" stroke="#3a3b86" stroke-width="2"/>
<line x1="565.3" y1="87" x2="636" y2="87" stroke="#3a3b86" stroke-width="2"/>
<path d="M626 35.2 Q631.8 42 633.2 51.8" fill="none" stroke="#d64a4a" stroke-width="3.7"/>
<path d="M630.4 28.8 Q638.8 39 640.6 54.2" fill="none" stroke="#d64a4a" stroke-width="3.7"/>
<path d="M584.3 14 C581.5 16,586 44,609.6 82.4 C606 62,590 15,584.3 14 Z" fill="#fdfdff" stroke="#4043a0" stroke-width="0.9"/>
<path d="M602 46.4 L619.8 47 L603 47.8 Z" fill="#4043a0" stroke="#4043a0" stroke-width="0.5"/>
<path d="M619.8 47 L612 57.2" fill="none" stroke="#4043a0" stroke-width="0.8"/>
<path d="M586.2 36.5 C586.4 48,588.6 54,588.8 59 C588.6 62,585 63,582.6 63.4" fill="none" stroke="#4043a0" stroke-width="1.1"/>
<path d="M586.5 62 C592 63.5,598 72,607.5 81.5 C599 76,592 66.5,586.5 64.5" fill="#4043a0" stroke="#4043a0" stroke-width="0.6"/>
<circle cx="578.8" cy="66.4" r="3.9" fill="#fff" stroke="#4043a0" stroke-width="1.5"/>
<path d="M573.2 69 C575 73,578 75.5,580.6 76 C584 75,586 70,586.4 64.5 C588 72,584.5 76,582.6 78.5 C583.6 82.5,586.6 85.6,590 87 L566.5 87 C573 85,578.6 82.6,579.6 78.2 C576.6 76.4,573.8 73,573.2 69 Z" fill="#4043a0" stroke="#4043a0" stroke-width="0.5"/>
<text x="550.0" y="100.4" font-family="'Liberation Serif', serif" font-size="14.2" font-weight="bold" fill="#c8413e" textLength="21.4" lengthAdjust="spacingAndGlyphs" stroke="#c8413e" stroke-width="0.45">DX</text>
<text x="571.6" y="100.4" font-family="'Liberation Serif', serif" font-size="14.2" font-weight="bold" fill="#2d3374" textLength="80.6" lengthAdjust="spacingAndGlyphs" stroke="#2d3374" stroke-width="0.45">SATCS.COM</text>
</g>
</svg>
</body></html>
